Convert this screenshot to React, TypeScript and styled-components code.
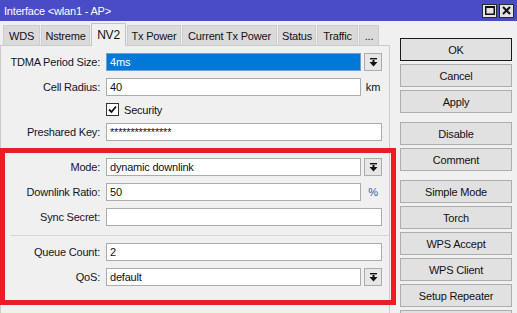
import React from 'react';
import styled, { createGlobalStyle } from 'styled-components';

const tabs = [
  { label: 'WDS', width: 37 },
  { label: 'Nstreme', width: 49 },
  { label: 'NV2', width: 35, active: true },
  { label: 'Tx Power', width: 54 },
  { label: 'Current Tx Power', width: 95 },
  { label: 'Status', width: 38 },
  { label: 'Traffic', width: 41 },
  { label: '...', width: 20 },
];

// the last one is only its top edge in the window, so it carries no text
const buttons = [
  { label: 'OK', primary: true },
  { label: 'Cancel' },
  { label: 'Apply' },
  { label: 'Disable', spaced: true },
  { label: 'Comment' },
  { label: 'Simple Mode', spaced: true },
  { label: 'Torch' },
  { label: 'WPS Accept' },
  { label: 'WPS Client' },
  { label: 'Setup Repeater' },
  { label: '' },
];

const DropIcon = () => (
  <svg width='9' height='9' viewBox='0 0 9 9'>
    <rect x='1' y='0' width='7' height='1.4' fill='#111' />
    <rect x='3.5' y='2' width='2' height='2.5' fill='#111' />
    <polygon points='0.5,4 8.5,4 4.5,8.5' fill='#111' />
  </svg>
);

const Select: React.FC<{ value: string; selected?: boolean }> = ({
  value,
  selected,
}) => (
  <Control>
    <Field $selected={selected}>{value}</Field>
    <DropButton>
      <DropIcon />
    </DropButton>
  </Control>
);

const App: React.FC = () => {
  return (
    <Window>
      <GlobalStyle />
      <TitleBar>
        <TitleText>Interface &lt;wlan1 - AP&gt;</TitleText>
        <TitleButtons>
          <TitleButton>
            <svg width='10' height='9' viewBox='0 0 10 9'>
              <rect x='0.75' y='1' width='8.5' height='7.25' fill='none' stroke='#111' strokeWidth='1.5' />
              <rect x='0' y='0' width='10' height='2' fill='#111' />
            </svg>
          </TitleButton>
          <TitleButton>
            <svg width='9' height='9' viewBox='0 0 9 9'>
              <path d='M1 1 L8 8 M8 1 L1 8' stroke='#111' strokeWidth='2' />
            </svg>
          </TitleButton>
        </TitleButtons>
      </TitleBar>

      <Body>
        <LeftPane>
          <TabStrip>
            {tabs.map((tab) => (
              <Tab key={tab.label} $width={tab.width} $active={tab.active}>
                {tab.label}
              </Tab>
            ))}
          </TabStrip>

          <Panel>
            <FieldRow>
              <Label>TDMA Period Size:</Label>
              <Select value='4ms' selected />
            </FieldRow>
            <FieldRow>
              <Label>Cell Radius:</Label>
              <Control>
                <Field>40</Field>
                <Unit>km</Unit>
              </Control>
            </FieldRow>
            <FieldRow $short>
              <Label />
              <CheckLine>
                <CheckBox>
                  <svg width='9' height='9' viewBox='0 0 9 9'>
                    <path d='M1 4.5 L3.5 7 L8 1.5' fill='none' stroke='#111' strokeWidth='1.8' />
                  </svg>
                </CheckBox>
                Security
              </CheckLine>
            </FieldRow>
            <FieldRow>
              <Label>Preshared Key:</Label>
              <Field>***************</Field>
            </FieldRow>

            <Highlight>
              <FieldRow $labelWidth={95}>
                <Label>Mode:</Label>
                <Select value='dynamic downlink' />
              </FieldRow>
              <FieldRow $labelWidth={95}>
                <Label>Downlink Ratio:</Label>
                <Control>
                  <Field>50</Field>
                  <Unit $color='#2f5f9e'>%</Unit>
                </Control>
              </FieldRow>
              <FieldRow $labelWidth={95}>
                <Label>Sync Secret:</Label>
                <Field />
              </FieldRow>
              <Separator />
              <FieldRow $labelWidth={95}>
                <Label>Queue Count:</Label>
                <Field>2</Field>
              </FieldRow>
              <FieldRow $labelWidth={95}>
                <Label>QoS:</Label>
                <Select value='default' />
              </FieldRow>
            </Highlight>
          </Panel>
        </LeftPane>

        <ButtonColumn>
          {buttons.map((b, i) => (
            <ActionButton key={i} $primary={b.primary} $spaced={b.spaced}>
              {b.label}
            </ActionButton>
          ))}
        </ButtonColumn>
      </Body>
    </Window>
  );
};

const GlobalStyle = createGlobalStyle`
  html, body {
    margin: 0;
    padding: 0;
  }
  body {
    width: 517px;
    height: 313px;
    overflow: hidden;
    background: #f0f0f0;
    font-family: 'Liberation Sans', Arial, sans-serif;
    font-size: 11px;
    letter-spacing: -0.2px;
    color: #111;
  }
  * {
    box-sizing: border-box;
  }
`;

const Window = styled.div`
  display: flex;
  flex-direction: column;
  width: 517px;
  height: 313px;
  overflow: hidden;
  background: #f0f0f0;
`;

const TitleBar = styled.div`
  display: flex;
  align-items: center;
  justify-content: space-between;
  height: 21px;
  padding: 0 3px 0 4px;
  background: #4a4bc7;
  color: #fff;
`;

const TitleText = styled.span`
  font-size: 11px;
`;

const TitleButtons = styled.div`
  display: flex;
  gap: 2px;
`;

const TitleButton = styled.div`
  display: flex;
  align-items: center;
  justify-content: center;
  width: 15px;
  height: 14px;
  border: 1px solid #2a2a2a;
  background: #e4e4e4;
`;

const Body = styled.div`
  display: flex;
  flex: 1;
  min-height: 0;
`;

const LeftPane = styled.div`
  display: flex;
  flex-direction: column;
  width: 390px;
`;

const TabStrip = styled.div`
  display: flex;
  align-items: flex-end;
  gap: 1px;
  height: 24px;
  padding-left: 3px;
`;

const Tab = styled.div<{ $width: number; $active?: boolean }>`
  display: flex;
  align-items: center;
  justify-content: center;
  width: ${(p) => p.$width}px;
  height: ${(p) => (p.$active ? 23 : 20)}px;
  margin-bottom: ${(p) => (p.$active ? -1 : 0)}px;
  position: relative;
  z-index: ${(p) => (p.$active ? 1 : 0)};
  border: 1px solid ${(p) => (p.$active ? '#c2c2c2' : '#cdcdcd')};
  border-bottom: none;
  background: ${(p) => (p.$active ? '#f0f0f0' : '#dadada')};
  font-size: ${(p) => (p.$active ? 12 : 11)}px;
  white-space: nowrap;
`;

const Panel = styled.div`
  display: flex;
  flex-direction: column;
  gap: 7px;
  flex: 1;
  padding: 7px 7px 0 0;
  border: 1px solid #cbcbcb;
  border-bottom: none;
`;

const FieldRow = styled.div<{ $labelWidth?: number; $short?: boolean }>`
  display: grid;
  grid-template-columns: ${(p) => p.$labelWidth ?? 99}px 1fr;
  column-gap: 6px;
  align-items: center;
  height: ${(p) => (p.$short ? 13 : 18)}px;
`;

const Label = styled.span`
  text-align: right;
  white-space: nowrap;
  color: #14142a;
`;

const Control = styled.div`
  display: flex;
  gap: 3px;
  height: 18px;
`;

const Field = styled.div<{ $selected?: boolean }>`
  display: flex;
  align-items: center;
  flex: 1;
  height: 18px;
  padding: 0 3px;
  border: 1px solid ${(p) => (p.$selected ? '#6f9fd6' : '#acacac')};
  background: ${(p) => (p.$selected ? '#0078d7' : '#fff')};
  color: ${(p) => (p.$selected ? '#fff' : '#111')};
  white-space: nowrap;
`;

const DropButton = styled.div`
  display: flex;
  align-items: center;
  justify-content: center;
  width: 18px;
  height: 18px;
  border: 1px solid #acacac;
  background: #e6e6e6;
`;

const Unit = styled.span<{ $color?: string }>`
  width: 18px;
  line-height: 18px;
  text-align: center;
  color: ${(p) => p.$color ?? '#111'};
`;

const CheckLine = styled.div`
  display: flex;
  align-items: center;
  gap: 5px;
`;

const CheckBox = styled.div`
  display: flex;
  align-items: center;
  justify-content: center;
  width: 13px;
  height: 13px;
  border: 1px solid #333;
  background: #fff;
`;

const Highlight = styled.div`
  display: flex;
  flex-direction: column;
  gap: 7px;
  margin: 0 -14px 0 -1px;
  padding: 5px 9px 14px 0;
  border: 5px solid #ed1c24;
`;

const Separator = styled.div`
  height: 1px;
  margin: 2px -7px 0 5px;
  background: #d6d6d6;
`;

const ButtonColumn = styled.div`
  display: flex;
  flex-direction: column;
  gap: 3px;
  width: 112px;
  margin-left: 10px;
  padding-top: 17px;
`;

const ActionButton = styled.div<{ $primary?: boolean; $spaced?: boolean }>`
  display: flex;
  align-items: center;
  justify-content: center;
  flex: 0 0 23px;
  height: 23px;
  margin-top: ${(p) => (p.$spaced ? 6 : 0)}px;
  border: 1px solid ${(p) => (p.$primary ? '#1a1a1a' : '#adadad')};
  background: #e1e1e1;
  color: #111;
  white-space: nowrap;
`;

export default App;
